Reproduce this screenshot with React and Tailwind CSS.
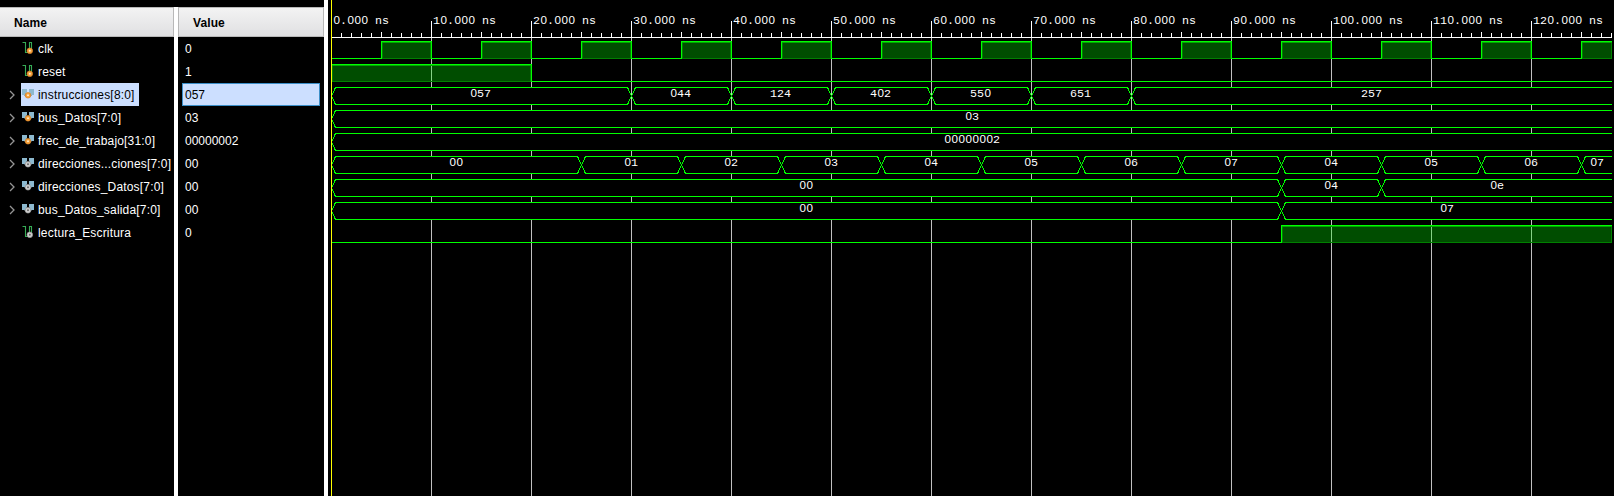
import React from "react";

const END = 1281;
const ROW = 23;

const signals = [
  { name: "clk", value: "0", kind: "bit", tone: "in", high: Array.from({ length: 13 }, (_, i) => [50 + i * 100, Math.min(100 + i * 100, END)]) },
  { name: "reset", value: "1", kind: "bit", tone: "in", high: [[0, 200]] },
  { name: "instrucciones[8:0]", value: "057", kind: "bus", tone: "in", selected: true, steps: [[0, "057"], [300, "044"], [400, "124"], [500, "402"], [600, "550"], [700, "651"], [800, "257"]] },
  { name: "bus_Datos[7:0]", value: "03", kind: "bus", tone: "in", steps: [[0, "03"]] },
  { name: "frec_de_trabajo[31:0]", value: "00000002", kind: "bus", tone: "in", steps: [[0, "00000002"]] },
  { name: "direcciones...ciones[7:0]", value: "00", kind: "bus", tone: "out", steps: [[0, "00"], [250, "01"], [350, "02"], [450, "03"], [550, "04"], [650, "05"], [750, "06"], [850, "07"], [950, "04"], [1050, "05"], [1150, "06"], [1250, "07"]] },
  { name: "direcciones_Datos[7:0]", value: "00", kind: "bus", tone: "out", steps: [[0, "00"], [950, "04"], [1050, "0e"]] },
  { name: "bus_Datos_salida[7:0]", value: "00", kind: "bus", tone: "out", steps: [[0, "00"], [950, "07"]] },
  { name: "lectura_Escritura", value: "0", kind: "bit", tone: "out", high: [[950, END]] },
];

function Ball({ tone, cx, cy }) {
  const orange = tone === "in";
  return (
    <g>
      <circle cx={cx} cy={cy} r="2.8" fill={orange ? "#f5a03a" : "#d0d0d0"} stroke={orange ? "#d88428" : "#9a9a9a"} strokeWidth="0.7" />
      <circle cx={cx} cy={cy} r="1" fill={orange ? "#ffeccc" : "#6a6a6a"} />
    </g>
  );
}

function SignalIcon({ kind, tone }) {
  return (
    <svg width="14" height="15" viewBox="0 0 14 15" className="shrink-0">
      {kind === "bit" ? (
        <path d="M1.5 1.5H4.5V11.5H8.5V1.5H10.5V8" fill="none" stroke="#36ab55" strokeWidth="1.1" />
      ) : (
        <g>
          <path d="M3 6H11V8L9 10H5L3 8Z" fill="#5f7480" />
          <path d="M1 2H6V5L4 8H1ZM8 2H13V8H10L8 5Z" fill="#8db9cf" />
        </g>
      )}
      <Ball tone={tone} cx={kind === "bit" ? 8.8 : 7} cy={kind === "bit" ? 9.8 : 8.3} />
    </svg>
  );
}

function Header({ children, className }) {
  return (
    <div className={`h-[30px] shrink-0 border-t border-r border-b border-[#b8b8b8] bg-linear-to-b from-[#f3f3f3] to-[#e0e0e2] text-[12px] leading-[30px] font-bold tracking-[0.1px] text-black ${className}`}>
      {children}
    </div>
  );
}

// Monospaced label; zeros use an undotted glyph.
function MonoText({ x, y, children, centered }) {
  const start = centered ? Math.floor(x - (children.length * 7) / 2) : x;
  return (
    <text y={y} fill="#fff" fontSize="11.67" fontFamily="'Liberation Mono', monospace">
      {children.split("").map((c, i) => (
        <tspan key={i} x={start + i * 7 + (c === "0" ? 0.4 : 0)} fontFamily={c === "0" ? "'Liberation Sans', sans-serif" : undefined}>
          {c}
        </tspan>
      ))}
    </text>
  );
}

function Bit({ high, top }) {
  const low = top + 17;
  let d = `M0 ${low + 0.5}`;
  high.forEach(([a, b]) => {
    d += a === 0 ? `M0.5 ${top + 0.5}` : `H${a + 0.5}V${top + 0.5}`;
    d += b >= END ? `H${END}` : `H${b + 0.5}V${low + 0.5}`;
  });
  if (high[high.length - 1][1] < END) d += `H${END}`;
  return (
    <g>
      {high.map(([a, b]) => (
        <g key={a}>
          <rect x={a + 1} y={top + 1} width={b - a - 1} height="17" fill="#00ff00" fillOpacity="0.3" />
          <path d={`M${a + 1.5} ${low + 0.5}V${top + 1.5}H${b - 0.5}V${low + 0.5}Z`} fill="none" stroke="#008000" />
          <path d={`M${a + 1} ${top + 1.5}H${b}`} stroke="#00a800" />
        </g>
      ))}
      <path d={d} fill="none" stroke="#00ff00" />
    </g>
  );
}

function Bus({ steps, top }) {
  return (
    <g>
      {steps.map(([a, label], i) => {
        const b = i + 1 < steps.length ? steps[i + 1][0] : END;
        const last = b === END;
        const t = top + 0.5;
        const m = top + 9;
        const l = top + 17.5;
        const right = last ? `H${END}` : `H${b - 3.5}L${b + 0.5} ${m}`;
        const back = last ? `M${END} ${l}` : `L${b - 3.5} ${l}`;
        return (
          <g key={a}>
            <rect x={a + (i ? 1 : 0)} y={top} width={b - a - (last ? 0 : 1)} height="18" fill="#000" />
            <path d={`M${a + 0.5} ${m}L${a + 4.5} ${t}${right}${back}H${a + 4.5}L${a + 0.5} ${m}`} fill="none" stroke="#00ff00" />
            <MonoText x={(a + b + (last ? 1 : 0)) / 2} y={top + 10} centered>{label}</MonoText>
          </g>
        );
      })}
    </g>
  );
}

function Waveform() {
  return (
    <svg width="1281" height="496" viewBox="0 0 1281 496" shapeRendering="crispEdges" className="block">
      {Array.from({ length: 12 }, (_, i) => (
        <path key={i} d={`M${(i + 1) * 100 + 0.5} 38V496`} stroke="#c0c0c0" />
      ))}
      {Array.from({ length: 128 }, (_, i) => i + 1).map((n) => (
        <path key={n} d={`M${n * 10 + 0.5} ${n % 10 === 0 ? 21 : n % 5 === 0 ? 32 : 33}V37`} stroke="#fff" />
      ))}
      <path d="M0 37.5H1281" stroke="#fff" />
      {Array.from({ length: 13 }, (_, i) => (
        <MonoText key={i} x={i * 100 + 2} y={24}>{`${i * 10}.000 ns`}</MonoText>
      ))}
      {signals.map((s, i) =>
        s.kind === "bit" ? <Bit key={s.name} high={s.high} top={41 + i * ROW} /> : <Bus key={s.name} steps={s.steps} top={41 + i * ROW} />
      )}
      <path d="M0.5 0V496" stroke="#ffff00" />
    </svg>
  );
}

export default function App() {
  return (
    <div className="flex h-[496px] w-[1614px] overflow-hidden bg-black font-['Liberation_Sans',sans-serif] text-[12px] text-white">
      <div className="flex w-[174px] shrink-0 flex-col pt-[7px]">
        <Header className="pl-[14px]">Name</Header>
        {signals.map((s) => (
          <div key={s.name} className="flex h-[23px] shrink-0 items-center pl-[8px]">
            <svg width="8" height="10" viewBox="0 0 8 10" className="mr-[5px] shrink-0">
              {s.kind === "bus" && <path d="M2 1L6 5L2 9" fill="none" stroke="#959595" strokeWidth="1.3" />}
            </svg>
            <div className={`flex h-[23px] items-center whitespace-nowrap ${s.selected ? "bg-[#ccdfff] pr-[4px] text-black" : ""}`}>
              <SignalIcon kind={s.kind} tone={s.tone} />
              <span className="pl-[3px] tracking-[0.18px]">{s.name}</span>
            </div>
          </div>
        ))}
      </div>
      <div className="mt-[7px] w-[4px] shrink-0 bg-white" />
      <div className="flex w-[146px] shrink-0 flex-col pt-[7px]">
        <Header className="border-l pl-[14px]">Value</Header>
        {signals.map((s) => (
          <div key={s.name} className={`mr-[4px] ml-[4px] flex h-[23px] shrink-0 items-center border pl-[2px] ${s.selected ? "border-[#3c8fc8] bg-[#ccdfff] text-black" : "border-transparent"}`}>
            {s.value}
          </div>
        ))}
      </div>
      <div className="w-[4px] shrink-0 bg-white" />
      <div className="ml-[3px] w-[1281px] shrink-0">
        <Waveform />
      </div>
    </div>
  );
}
